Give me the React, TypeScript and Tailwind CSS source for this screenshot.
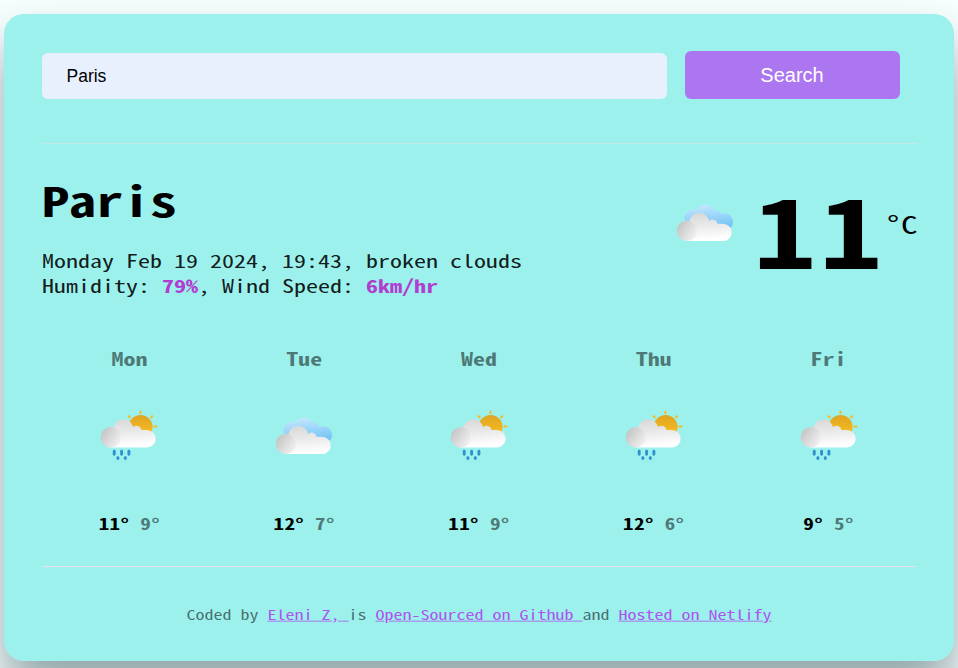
import React from "react";

function FrontCloud({ id, y }: { id: string; y: number }) {
  return (
    <g transform={`translate(0 ${y})`}>
      <defs>
        <linearGradient id={`${id}-body`} x1="0" y1="0" x2="0.15" y2="1">
          <stop offset="0" stopColor="#d6d6d6" />
          <stop offset="0.55" stopColor="#ebebeb" />
          <stop offset="1" stopColor="#ffffff" />
        </linearGradient>
        <linearGradient id={`${id}-puff`} x1="0.1" y1="0.25" x2="0.9" y2="0.8">
          <stop offset="0" stopColor="#c6c6c6" />
          <stop offset="1" stopColor="#f0f0f0" />
        </linearGradient>
      </defs>
      <path
        d="M11 28.2A10.4 10.4 0 0 1 11 7.9L13.5 8.2A10 10 0 0 1 33.1 8A5 5 0 0 1 41.5 10.8H47A8.7 8.7 0 0 1 47 28.2Z"
        fill={`url(#${id}-body)`}
      />
      <circle cx="10.9" cy="18" r="10.2" fill={`url(#${id}-puff)`} />
    </g>
  );
}

function CloudsIcon({ id }: { id: string }) {
  return (
    <svg width="58" height="52" viewBox="0 0 58 52" className="block">
      <defs>
        <linearGradient id={`${id}-back`} x1="0.4" y1="0" x2="0.6" y2="1">
          <stop offset="0" stopColor="#c3e7fd" />
          <stop offset="1" stopColor="#6abff5" />
        </linearGradient>
      </defs>
      <path
        d="M10 25A8 8 0 0 1 20 13.2A9.6 9.6 0 0 1 37.5 13A6.3 6.3 0 0 1 44.5 17.1A8.7 8.7 0 0 1 55.2 30.3L40 34Z"
        fill={`url(#${id}-back)`}
      />
      <FrontCloud id={id} y={15.9} />
    </svg>
  );
}

function RainIcon({ id }: { id: string }) {
  return (
    <svg width="58" height="52" viewBox="0 0 58 52" className="block">
      <defs>
        <linearGradient id={`${id}-sun`} x1="0" y1="0" x2="0" y2="1">
          <stop offset="0" stopColor="#dfa423" />
          <stop offset="0.8" stopColor="#f8bd20" />
        </linearGradient>
      </defs>
      <circle cx="40.6" cy="17" r="12" fill={`url(#${id}-sun)`} />
      <g stroke="#fbb91f" strokeWidth="2" strokeLinecap="round">
        <path d="M40.4 1.6v1.7M28.6 6.2l1.2 1.2M52.2 6.2l-1.2 1.2M54.4 16.5h2" />
      </g>
      <FrontCloud id={id} y={9.2} />
      <g stroke="#2e91cf" strokeWidth="2.9" strokeLinecap="round">
        <path d="M14.2 41.2v3M21.6 41.2v3M28.9 41.2v3M17.9 47.6v.9M25.3 47.6v.9" />
      </g>
    </svg>
  );
}

const days = [
  { day: "Mon", icon: "rain", max: "11°", min: "9°" },
  { day: "Tue", icon: "clouds", max: "12°", min: "7°" },
  { day: "Wed", icon: "rain", max: "11°", min: "9°" },
  { day: "Thu", icon: "rain", max: "12°", min: "6°" },
  { day: "Fri", icon: "rain", max: "9°", min: "5°" },
];

export default function App() {
  return (
    <div className="h-[668px] w-[958px] overflow-hidden bg-[#f8ffff] pt-[14px] pl-1 font-['Noto_Sans_Mono_CJK_SC','Liberation_Mono',monospace] text-black">
      <main className="h-[647px] w-[950px] rounded-[20px] bg-[#9cf1ed] pt-[37px] pr-[37px] pl-[38px] shadow-[0_30px_50px_rgba(10,45,50,0.43)]">
        <form className="flex h-[93px] items-start border-b border-[#c5e9e6] font-['Liberation_Sans',Arial,sans-serif]">
          <input
            type="text"
            defaultValue="Paris"
            className="mt-0.5 h-[46px] w-[625px] rounded-md bg-[#e8f0fe] px-[24.5px] text-[17.5px] outline-none"
          />
          <button type="button" className="ml-[18px] h-12 w-[215px] rounded-md bg-[#ab76f0] pr-px text-xl text-white">
            Search
          </button>
        </form>

        <section className="flex h-[165px] justify-between">
          <div className="pt-[33px]">
            <div className="h-[71px]">
              <h1 className="origin-top scale-y-75 text-[54px] leading-[60px] font-bold">Paris</h1>
            </div>
            <p className="origin-top scale-y-75 text-[24px] leading-[33.33px] whitespace-nowrap text-black/90">
              Monday Feb 19 2024, 19:43, broken clouds
              <br />
              Humidity: <strong className="text-[#b13ed0]">79%</strong>, Wind Speed:{" "}
              <strong className="text-[#b13ed0]">6km/hr</strong>
            </p>
          </div>
          <div className="-mr-[2px] flex items-start">
            <div className="mt-[53px] mr-[20px]">
              <CloudsIcon id="now" />
            </div>
            <div className="mt-[32.5px] mr-px origin-top scale-y-[0.766] text-[124px] leading-[132px] font-bold tracking-[4px]">
              11
            </div>
            <div className="mt-[66px] origin-top scale-y-75 text-[33px] leading-[36px] tracking-[1.6px]">°C</div>
          </div>
        </section>

        <section className="h-[258px] border-b border-[#e6e0ea] pt-[40px] text-center">
          <div className="grid w-[874px] grid-cols-5">
            {days.map((d) => (
              <div key={d.day} className="flex flex-col items-center">
                <div className="origin-top scale-y-75 text-[24px] leading-[24px] font-bold text-black/50">{d.day}</div>
                <div className="mt-[37px]">
                  {d.icon === "rain" ? <RainIcon id={d.day} /> : <CloudsIcon id={d.day} />}
                </div>
                <div className="mt-[52px] origin-top scale-y-75 text-[21px] leading-[24px] font-bold tracking-[0.4px] whitespace-pre">
                  {d.max} <span className="text-black/50">{d.min}</span>
                </div>
              </div>
            ))}
          </div>
        </section>

        <footer className="mt-[38px] -ml-px origin-top scale-y-75 text-center text-[18px] leading-[24px] whitespace-pre text-black/55">
          Coded by <a className="text-[#b13ef0]/90 underline" href="#">Eleni Z, </a>is{" "}
          <a className="text-[#b13ef0]/90 underline" href="#">Open-Sourced on Github </a>and{" "}
          <a className="text-[#b13ef0]/90 underline" href="#">Hosted on Netlify</a>
        </footer>
      </main>
    </div>
  );
}
